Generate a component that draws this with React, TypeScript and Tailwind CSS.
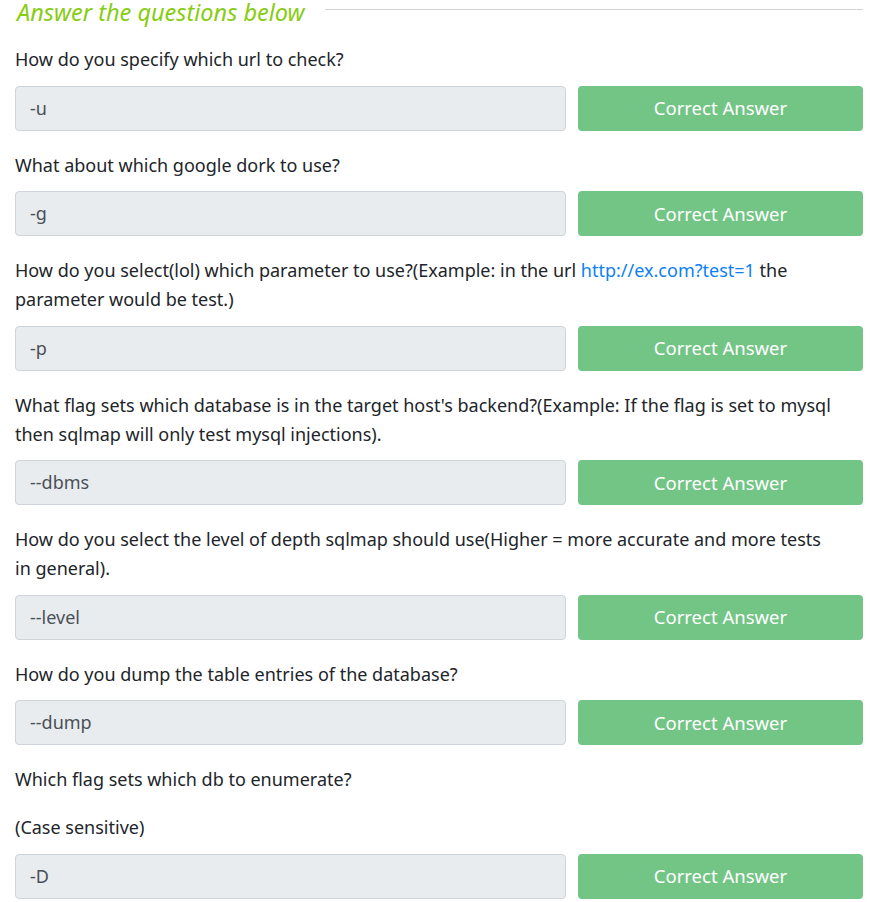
import React from "react";

type Q = { lines: React.ReactNode[][]; answer: string };

const questions: Q[] = [
  { lines: [["How do you specify which url to check?"]], answer: "-u" },
  { lines: [["What about which google dork to use?"]], answer: "-g" },
  {
    lines: [
      [
        <>
          How do you select(lol) which parameter to use?(Example: in the url{" "}
          <span className="text-[#0d7ff7]">http://ex.com?test=1</span> the
        </>,
        "parameter would be test.)",
      ],
    ],
    answer: "-p",
  },
  {
    lines: [
      [
        "What flag sets which database is in the target host's backend?(Example: If the flag is set to mysql",
        "then sqlmap will only test mysql injections).",
      ],
    ],
    answer: "--dbms",
  },
  {
    lines: [
      [
        "How do you select the level of depth sqlmap should use(Higher = more accurate and more tests",
        "in general).",
      ],
    ],
    answer: "--level",
  },
  { lines: [["How do you dump the table entries of the database?"]], answer: "--dump" },
  { lines: [["Which flag sets which db to enumerate?"], ["(Case sensitive)"]], answer: "-D" },
];

export default function App() {
  return (
    <div
      className="w-[880px] bg-white pl-[15px] pr-[17px] text-[#212529]"
      style={{ fontFamily: '"Noto Sans", "Open Sans", sans-serif' }}
    >
      <div className="flex items-start h-[24px]">
        <span className="text-[23.5px] italic leading-[24px] text-[#88cc14] pl-[2px] whitespace-nowrap">
          Answer the questions below
        </span>
        <div className="ml-[20px] flex-1 h-px bg-[#d3d3d3] mt-[9px]" />
      </div>
      <div className="pt-[21px]">
        {questions.map((q, i) => (
          <div key={i} className={i === 0 ? "" : "pt-[20px]"}>
            {q.lines.map((para, j) => (
              <p
                key={j}
                className={`text-[18px] leading-[29px] ${j < q.lines.length - 1 ? "mb-[19px]" : "mb-[11.5px]"}`}
              >
                {para.map((l, k) => (
                  <span key={k} className="block whitespace-nowrap">
                    {l}
                  </span>
                ))}
              </p>
            ))}
            <div className="flex gap-[12px]">
              <div className="w-[551px] h-[45px] rounded-[4px] border border-[#ced4da] bg-[#e9ecef] px-[14px] flex items-center text-[18px] text-[#495057]">
                {q.answer}
              </div>
              <button className="flex-1 h-[45px] rounded-[4px] bg-[#72c585] text-white text-[18.5px] flex items-center justify-center">
                Correct Answer
              </button>
            </div>
          </div>
        ))}
      </div>
    </div>
  );
}
